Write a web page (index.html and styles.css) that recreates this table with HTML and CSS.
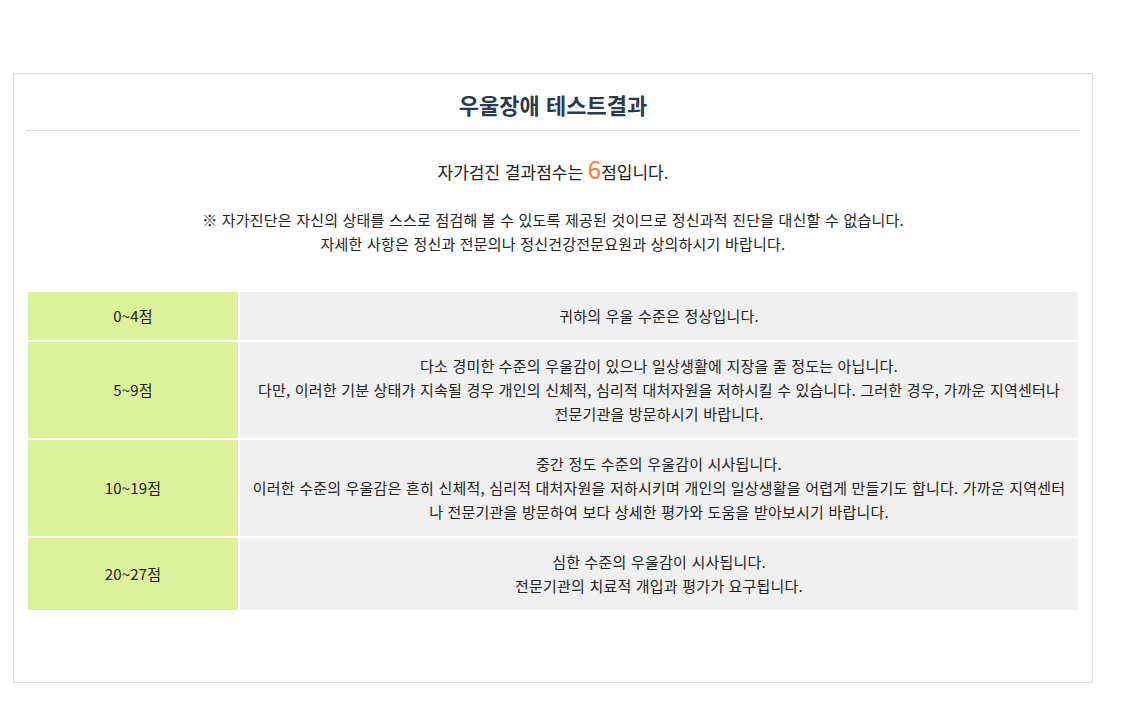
FILE: index.html
```html
<!DOCTYPE html>
<html lang="ko">
<head>
<meta charset="utf-8">
<title>우울장애 테스트결과</title>
<link rel="stylesheet" href="styles.css">
</head>
<body>
<div class="page">
  <section class="result-box">
    <h2 class="result-title">우울장애 테스트결과</h2>
    <p class="score">자가검진 결과점수는 <span class="score-num">6</span>점입니다.</p>
    <p class="notice">※ 자가진단은 자신의 상태를 스스로 점검해 볼 수 있도록 제공된 것이므로 정신과적 진단을 대신할 수 없습니다.<br>자세한 사항은 정신과 전문의나 정신건강전문요원과 상의하시기 바랍니다.</p>
    <table class="result-table">
      <tr>
        <th>0~4점</th>
        <td>귀하의 우울 수준은 정상입니다.</td>
      </tr>
      <tr>
        <th>5~9점</th>
        <td>다소 경미한 수준의 우울감이 있으나 일상생활에 지장을 줄 정도는 아닙니다.<br>다만, 이러한 기분 상태가 지속될 경우 개인의 신체적, 심리적 대처자원을 저하시킬 수 있습니다. 그러한 경우, 가까운 지역센터나 전문기관을 방문하시기 바랍니다.</td>
      </tr>
      <tr>
        <th>10~19점</th>
        <td>중간 정도 수준의 우울감이 시사됩니다.<br>이러한 수준의 우울감은 흔히 신체적, 심리적 대처자원을 저하시키며 개인의 일상생활을 어렵게 만들기도 합니다. 가까운 지역센터나 전문기관을 방문하여 보다 상세한 평가와 도움을 받아보시기 바랍니다.</td>
      </tr>
      <tr>
        <th>20~27점</th>
        <td>심한 수준의 우울감이 시사됩니다.<br>전문기관의 치료적 개입과 평가가 요구됩니다.</td>
      </tr>
    </table>
  </section>
</div>
</body>
</html>
```

FILE: styles.css
```css
html, body {
  margin: 0;
  padding: 0;
  background: #fff;
}
body {
  font-family: "Noto Sans CJK KR", "Noto Sans", sans-serif;
  color: #222;
}
.page {
  padding: 73px 34px 38px 13px;
}
.result-box {
  border: 1px solid #dddddd;
  padding: 0 12px;
  box-sizing: border-box;
  height: 610px;
}
.result-title {
  margin: 0;
  height: 56px;
  line-height: 60px;
  font-size: 22px;
  font-weight: bold;
  color: #2c3a4d;
  text-align: center;
  border-bottom: 1px solid #dddddd;
}
.score {
  margin: 25px 0 0;
  font-size: 17px;
  line-height: 26px;
  text-align: center;
  color: #222;
}
.score-num {
  color: #ff7a30;
  font-size: 24px;
}
.notice {
  margin: 23px 0 0;
  font-size: 15px;
  line-height: 24px;
  letter-spacing: 0.2px;
  text-align: center;
  color: #222;
}
.result-table {
  width: 100%;
  margin-top: 34px;
  border-collapse: separate;
  border-spacing: 2px;
  font-size: 15px;
  line-height: 24px;
  letter-spacing: 0.2px;
}
.result-table th,
.result-table td {
  padding: 12px 10px;
  text-align: center;
  vertical-align: middle;
}
.result-table th {
  width: 190px;
  background: #dcf29a;
  font-weight: normal;
  color: #222;
}
.result-table td {
  background: #f0f0f0;
  color: #222;
}
```
